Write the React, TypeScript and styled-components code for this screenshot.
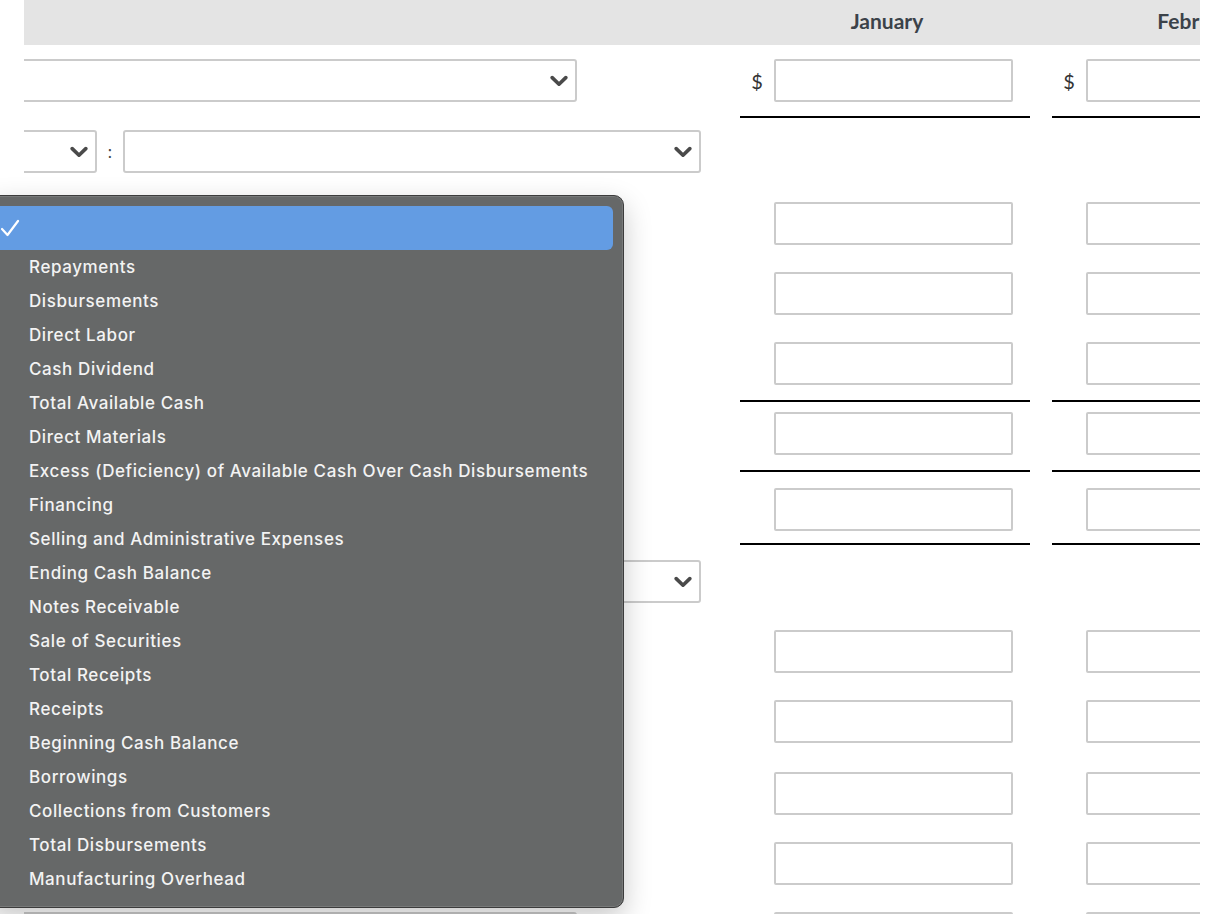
import React from 'react';
import styled, { createGlobalStyle } from 'styled-components';

const GlobalStyle = createGlobalStyle`
  html, body {
    margin: 0;
    padding: 0;
    background: #fff;
  }
  body {
    font-family: Lato, "Liberation Sans", sans-serif;
  }
`;

const Page = styled.div`
  position: relative;
  width: 1214px;
  height: 914px;
  overflow: hidden;
`;

const Viewport = styled.div`
  margin-left: 24px;
  width: 1176px;
  height: 100%;
  overflow: hidden;
`;

const Table = styled.div`
  margin-left: -20px;
  width: max-content;
`;

const HeaderRow = styled.div`
  display: grid;
  grid-template-columns: 714px 290px 290px;
  column-gap: 22px;
  height: 45px;
  background: #e4e4e4;
  align-items: center;
`;

const MonthTitle = styled.div`
  text-align: center;
  font-size: 21px;
  font-weight: 700;
  color: #3b4249;
  padding: 0 0 4px 4px;
  white-space: nowrap;
`;

const Row = styled.div<{ $pt: number }>`
  display: grid;
  grid-template-columns: 714px 290px 290px;
  column-gap: 22px;
  align-items: start;
  padding-top: ${(p) => p.$pt}px;
`;

const LeftCell = styled.div`
  display: flex;
  align-items: center;
`;

const MonthCell = styled.div<{ $pb?: number }>`
  display: flex;
  align-items: center;
  padding-bottom: ${(p) => (p.$pb ? `${p.$pb}px` : '0')};
  border-bottom: ${(p) => (p.$pb ? '2px solid #000' : 'none')};
`;

const Dollar = styled.span`
  width: 34px;
  text-align: center;
  font-size: 20px;
  color: #333;
`;

const Field = styled.input`
  box-sizing: border-box;
  width: 239px;
  height: 43px;
  margin: 0 0 0 34px;
  border: 2px solid #cbcbcb;
  border-radius: 2px;
  background: #fff;
  outline: none;

  ${Dollar} + & {
    margin-left: 0;
  }
`;

const SelectBox = styled.div<{ $w: number }>`
  box-sizing: border-box;
  width: ${(p) => p.$w}px;
  height: 43px;
  border: 2px solid #cbcbcb;
  border-radius: 3px;
  background: #fff;
  display: flex;
  align-items: center;
  justify-content: flex-end;
  padding-right: 7px;
`;

const Colon = styled.span`
  width: 26px;
  text-align: center;
  font-size: 17px;
  color: #444;
`;

const Menu = styled.div`
  position: absolute;
  left: -12px;
  top: 195px;
  width: 636px;
  height: 713px;
  box-sizing: border-box;
  padding: 10px 10px 0 6px;
  background: #666868;
  border: 1px solid #3c3c3c;
  border-radius: 10px;
  box-shadow: 0 10px 28px rgba(0, 0, 0, 0.22), inset 0 0 0 1px rgba(255, 255, 255, 0.12);
  font-family: Inter, "Noto Sans", sans-serif;
`;

const Selected = styled.div`
  height: 44px;
  border-radius: 6px;
  background: #639ce3;
  display: flex;
  align-items: center;
  padding-left: 6px;
`;

const Option = styled.div`
  height: 34px;
  line-height: 35px;
  padding-left: 34px;
  font-size: 17px;
  font-weight: 500;
  letter-spacing: 0.6px;
  color: #f3f3f3;
  white-space: nowrap;
`;

const Chevron = () => (
  <svg width="18" height="12" viewBox="0 0 18 12">
    <path d="M2.2 2.6 L9 9.2 L15.8 2.6" fill="none" stroke="#4a4a4a" strokeWidth="3.6" strokeLinecap="round" strokeLinejoin="round" />
  </svg>
);

const Check = () => (
  <svg width="20" height="20" viewBox="0 0 20 20">
    <path d="M1 11 L6.5 17 L17 3" fill="none" stroke="#fff" strokeWidth="2.2" strokeLinecap="round" strokeLinejoin="round" />
  </svg>
);

const options = [
  'Repayments',
  'Disbursements',
  'Direct Labor',
  'Cash Dividend',
  'Total Available Cash',
  'Direct Materials',
  'Excess (Deficiency) of Available Cash Over Cash Disbursements',
  'Financing',
  'Selling and Administrative Expenses',
  'Ending Cash Balance',
  'Notes Receivable',
  'Sale of Securities',
  'Total Receipts',
  'Receipts',
  'Beginning Cash Balance',
  'Borrowings',
  'Collections from Customers',
  'Total Disbursements',
  'Manufacturing Overhead',
];

type Line = {
  pt: number;
  kind: 'wide' | 'pair';
  inputs: boolean;
  dollar?: boolean;
  pb?: number;
};

const lines: Line[] = [
  { pt: 14, kind: 'wide', inputs: true, dollar: true, pb: 14 },
  { pt: 12, kind: 'pair', inputs: false },
  { pt: 29, kind: 'wide', inputs: true },
  { pt: 27, kind: 'wide', inputs: true },
  { pt: 27, kind: 'wide', inputs: true, pb: 15 },
  { pt: 10, kind: 'wide', inputs: true, pb: 15 },
  { pt: 16, kind: 'wide', inputs: true, pb: 12 },
  { pt: 15, kind: 'pair', inputs: false },
  { pt: 27, kind: 'wide', inputs: true },
  { pt: 27, kind: 'wide', inputs: true },
  { pt: 29, kind: 'wide', inputs: true },
  { pt: 27, kind: 'wide', inputs: true },
  { pt: 27, kind: 'wide', inputs: true },
];

const Left = ({ kind }: { kind: Line['kind'] }) => {
  if (kind === 'pair') {
    return (
      <LeftCell>
        <SelectBox $w={93}>
          <Chevron />
        </SelectBox>
        <Colon>:</Colon>
        <SelectBox $w={578}>
          <Chevron />
        </SelectBox>
      </LeftCell>
    );
  }
  return (
    <LeftCell>
      <SelectBox $w={573}>
        <Chevron />
      </SelectBox>
    </LeftCell>
  );
};

const Month = ({ line }: { line: Line }) => (
  <MonthCell $pb={line.pb}>
    {line.dollar && <Dollar>$</Dollar>}
    {line.inputs && <Field />}
  </MonthCell>
);

const App = () => {
  return (
    <Page>
      <GlobalStyle />
      <Viewport>
        <Table>
          <HeaderRow>
            <div />
            <MonthTitle>January</MonthTitle>
            <MonthTitle>February</MonthTitle>
          </HeaderRow>
          {lines.map((line, i) => (
            <Row key={i} $pt={line.pt}>
              <Left kind={line.kind} />
              <Month line={line} />
              <Month line={line} />
            </Row>
          ))}
        </Table>
      </Viewport>
      <Menu>
        <Selected>
          <Check />
        </Selected>
        {options.map((o) => (
          <Option key={o}>{o}</Option>
        ))}
      </Menu>
    </Page>
  );
};

export default App;
